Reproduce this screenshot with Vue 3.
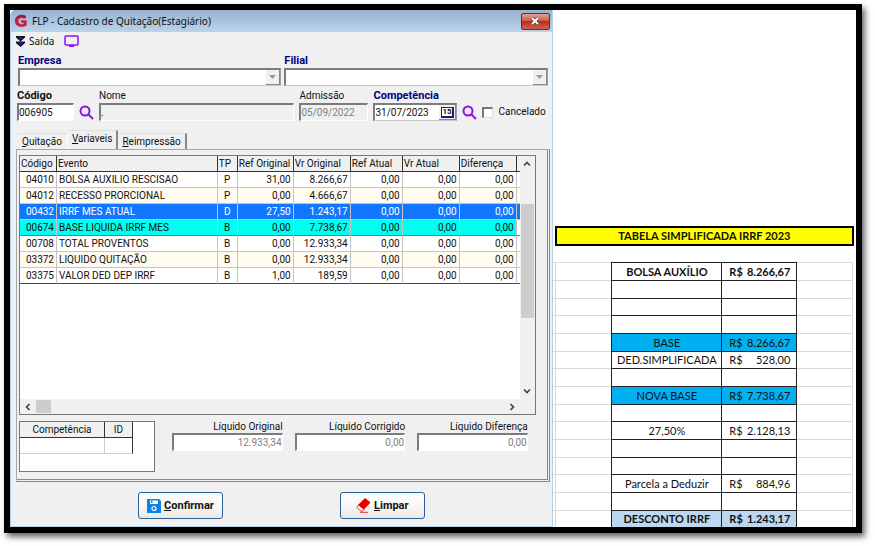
<script setup>
import { ref } from 'vue'

const codigo = ref('006905')
const nome = ref('.')
const admissao = ref('05/09/2022')
const competencia = ref('31/07/2023')
const cancelado = ref(false)

const tabs = [
	{ key: 'Q', rest: 'uitação' },
	{ key: 'V', rest: 'ariaveis' },
	{ key: 'R', rest: 'eimpressão' }
]
const activeTab = ref('V')

const headers = ['Código', 'Evento', 'TP', 'Ref Original', 'Vr Original', 'Ref Atual', 'Vr Atual', 'Diferença']

const eventos = [
	{ cod: '04010', nome: 'BOLSA AUXILIO RESCISAO', tp: 'P', vals: ['31,00', '8.266,67', '0,00', '0,00', '0,00'] },
	{ cod: '04012', nome: 'RECESSO PRORCIONAL', tp: 'P', vals: ['0,00', '4.666,67', '0,00', '0,00', '0,00'], cls: 'alt' },
	{ cod: '00432', nome: 'IRRF MES ATUAL', tp: 'D', vals: ['27,50', '1.243,17', '0,00', '0,00', '0,00'], cls: 'selected' },
	{ cod: '00674', nome: 'BASE LIQUIDA IRRF MES', tp: 'B', vals: ['0,00', '7.738,67', '0,00', '0,00', '0,00'], cls: 'marked' },
	{ cod: '00708', nome: 'TOTAL PROVENTOS', tp: 'B', vals: ['0,00', '12.933,34', '0,00', '0,00', '0,00'] },
	{ cod: '03372', nome: 'LIQUIDO QUITAÇÃO', tp: 'B', vals: ['0,00', '12.933,34', '0,00', '0,00', '0,00'], cls: 'alt' },
	{ cod: '03375', nome: 'VALOR DED DEP IRRF', tp: 'B', vals: ['1,00', '189,59', '0,00', '0,00', '0,00'] }
]

const totais = [
	{ id: 'liq-original', label: 'Líquido Original', value: '12.933,34' },
	{ id: 'liq-corrigido', label: 'Líquido Corrigido', value: '0,00' },
	{ id: 'liq-diferenca', label: 'Líquido Diferença', value: '0,00' }
]

// planilha: linhas vazias ficam com label e valor em branco
const linhas = [
	{ label: 'BOLSA AUXÍLIO', value: '8.266,67', cls: 'bold' },
	{}, {}, {},
	{ label: 'BASE', value: '8.266,67', cls: 'blue' },
	{ label: 'DED.SIMPLIFICADA', value: '528,00' },
	{},
	{ label: 'NOVA BASE', value: '7.738,67', cls: 'blue' },
	{},
	{ label: '27,50%', value: '2.128,13' },
	{}, {},
	{ label: 'Parcela a Deduzir', value: '884,96' },
	{},
	{ label: 'DESCONTO IRRF', value: '1.243,17', cls: 'bold light' }
]
</script>

<template>
	<div class="frame">
		<section class="window">
			<header class="titlebar">
				<svg class="logo" viewBox="0 0 16 16">
					<path d="M14 2.500C9-.8 1 1.500 1 8c0 6.500 8 8.200 13.500 5V7H8v3h3v1.500C8 12.500 5 11 5 8c0-3.500 4-4.500 7-2.500z" fill="#c8203c" />
					<path d="M1.300 6C3 1 9-.5 14 2.500L12.500 5C9 2.500 4 3 1.300 6z" fill="#a01848" />
				</svg>
				<span class="title">FLP - Cadastro de Quitação(Estagiário)</span>
				<button class="close" type="button" aria-label="Fechar">
					<svg viewBox="0 0 10 8" width="10" height="8">
						<path d="M2 1l6 6M8 1L2 7" stroke="#5c3a3a" stroke-width="3.400" />
						<path d="M2 1l6 6M8 1L2 7" stroke="#fff" stroke-width="2" />
					</svg>
				</button>
			</header>

			<nav class="toolbar">
				<button type="button" class="tool">
					<svg viewBox="0 0 9 11" width="9" height="11">
						<path d="M0 0h9v1.500L4.500 5.500 0 1.500zM0 5.500h9V7l-4.500 4L0 7z" fill="#111" />
						<path d="M2 1h5L4.500 4zM2 6.500h5L4.500 9.500z" fill="#1020e8" />
					</svg>
					<span>Saída</span>
				</button>
				<button type="button" class="tool" aria-label="Monitor">
					<svg viewBox="0 0 15 12" width="15" height="12">
						<rect x="1" y="1" width="13" height="9" rx="1" fill="none" stroke="#8b12e8" stroke-width="1.500" />
						<path d="M5 11h5" stroke="#8b12e8" stroke-width="2" />
					</svg>
				</button>
			</nav>

			<div class="filters">
				<div class="field grow">
					<label class="navy" for="empresa">Empresa</label>
					<div class="combo">
						<select id="empresa"><option></option></select>
						<span class="arrow"><svg viewBox="0 0 7 4" width="7" height="4"><path d="M0 0h7L3.500 4z" fill="#999" /></svg></span>
					</div>
				</div>
				<div class="field grow">
					<label class="navy" for="filial">Filial</label>
					<div class="combo">
						<select id="filial"><option></option></select>
						<span class="arrow"><svg viewBox="0 0 7 4" width="7" height="4"><path d="M0 0h7L3.500 4z" fill="#999" /></svg></span>
					</div>
				</div>
			</div>

			<div class="filters second">
				<div class="field codigo">
					<label class="strong" for="codigo">Código</label>
					<input id="codigo" v-model="codigo" class="box" type="text" />
				</div>
				<button type="button" class="search" aria-label="Pesquisar código">
					<svg viewBox="0 0 15 15" width="15" height="15"><circle cx="6" cy="6" r="4.500" /><path d="M9.500 9.500L14 14" /></svg>
				</button>
				<div class="field grow">
					<label for="nome">Nome</label>
					<input id="nome" v-model="nome" class="box gray" type="text" readonly />
				</div>
				<div class="field admissao">
					<label for="admissao">Admissão</label>
					<input id="admissao" v-model="admissao" class="box gray off" type="text" readonly />
				</div>
				<div class="field competencia">
					<label class="navy" for="competencia">Competência</label>
					<div class="combo">
						<input id="competencia" v-model="competencia" type="text" />
						<button type="button" class="cal" aria-label="Calendário"><span>15</span></button>
					</div>
				</div>
				<button type="button" class="search" aria-label="Pesquisar competência">
					<svg viewBox="0 0 15 15" width="15" height="15"><circle cx="6" cy="6" r="4.500" /><path d="M9.500 9.500L14 14" /></svg>
				</button>
				<label class="check"><input v-model="cancelado" type="checkbox" />Cancelado</label>
			</div>

			<div class="tabs">
				<button v-for="t in tabs" :key="t.key" type="button" class="tab" :class="{ active: t.key === activeTab }" @click="activeTab = t.key"><u>{{ t.key }}</u>{{ t.rest }}</button>
			</div>

			<div class="panel">
				<div class="grid">
					<div class="grid-body">
						<div class="tbl-wrap">
							<table class="tbl">
								<colgroup>
									<col class="c-cod" />
									<col />
									<col class="c-tp" />
									<col class="c-ref" />
									<col class="c-m" />
									<col class="c-s" />
									<col class="c-m" />
									<col class="c-m" />
									<col class="c-end" />
								</colgroup>
								<thead>
									<tr>
										<th v-for="h in headers" :key="h">{{ h }}</th>
										<th></th>
									</tr>
								</thead>
								<tbody>
									<tr v-for="e in eventos" :key="e.cod" :class="e.cls">
										<td class="num">{{ e.cod }}</td>
										<td>{{ e.nome }}</td>
										<td class="tp">{{ e.tp }}</td>
										<td v-for="(v, i) in e.vals" :key="i" class="num">{{ v }}</td>
										<td></td>
									</tr>
								</tbody>
							</table>
						</div>
						<div class="vscroll">
							<svg viewBox="0 0 8 5" width="8" height="5"><path d="M1 4.500l3-3 3 3" /></svg>
							<span class="vthumb"></span>
							<svg viewBox="0 0 8 5" width="8" height="5"><path d="M1 .5l3 3 3-3" /></svg>
						</div>
					</div>
					<div class="hscroll">
						<svg viewBox="0 0 5 8" width="5" height="8"><path d="M4.500 1l-3 3 3 3" /></svg>
						<span class="hthumb"></span>
						<svg viewBox="0 0 5 8" width="5" height="8"><path d="M.5 1l3 3-3 3" /></svg>
					</div>
				</div>

				<div class="bottom">
					<div class="mini">
						<table>
							<thead>
								<tr><th class="m-comp">Competência</th><th class="m-id">ID</th></tr>
							</thead>
							<tbody>
								<tr><td></td><td></td></tr>
							</tbody>
						</table>
					</div>
					<div class="totals">
						<div v-for="t in totais" :key="t.id" class="total">
							<label :for="t.id">{{ t.label }}</label>
							<input :id="t.id" class="box off" type="text" :value="t.value" readonly />
						</div>
					</div>
				</div>
			</div>

			<footer class="actions">
				<button type="button" class="action">
					<svg viewBox="0 0 14 14" width="14" height="14">
						<path d="M0 0h12l2 2v12H0z" fill="#0a84e4" />
						<path d="M3 1.500h8v3.500H3z" fill="#fff" />
						<path d="M4 2h1.500v2H4z" fill="#0a84e4" />
						<circle cx="7" cy="9.500" r="2" fill="none" stroke="#fff" stroke-width="1.200" />
					</svg>
					<span><u>C</u>onfirmar</span>
				</button>
				<button type="button" class="action">
					<svg viewBox="0 0 15 15" width="15" height="15">
						<path d="M9 0l5.500 4.500-7 7.500L2 7z" fill="#e60000" />
						<path d="M2.500 7L.8 9.500l4 3.500h2L8 11.500z" fill="#fff" stroke="#e60000" stroke-width=".8" />
						<path d="M4 14.300h8" stroke="#e60000" stroke-width=".8" />
					</svg>
					<span><u>L</u>impar</span>
				</button>
			</footer>
		</section>

		<section class="sheet">
			<h2>TABELA SIMPLIFICADA IRRF 2023</h2>
			<table>
				<colgroup>
					<col class="s-edge" />
					<col class="s-side" />
					<col class="s-label" />
					<col class="s-value" />
					<col class="s-side" />
					<col class="s-edge" />
				</colgroup>
				<tbody>
					<tr v-for="(l, i) in linhas" :key="i" :class="l.cls">
						<td class="line"></td>
						<td class="line"></td>
						<td class="cell first">{{ l.label }}</td>
						<td class="cell">
							<div v-if="l.value" class="money"><span>R$</span><span>{{ l.value }}</span></div>
						</td>
						<td class="line"></td>
						<td></td>
					</tr>
				</tbody>
			</table>
		</section>
	</div>
</template>

<style>
body {
	background: #fff;
}
</style>

<style scoped>
* {
	box-sizing: border-box;
}

.frame {
	display: flex;
	margin: 4px 13px 13px 4px;
	border: 6px solid #000;
	background: #fff;
	box-shadow: 3px 4px 6px rgba(0, 0, 0, .6);
	font-family: Roboto, "Liberation Sans", sans-serif;
	font-size: 10px;
	line-height: 12px;
	color: #111;
	overflow: hidden;
}

button,
input,
select {
	font: inherit;
	color: inherit;
	margin: 0;
	padding: 0;
	border: 0;
	border-radius: 0;
	background: none;
	min-width: 0;
}

svg {
	display: block;
	flex: none;
}

/* Janela */
.window {
	flex: 542 1 0;
	min-width: 0;
	background: #f0f0f0;
	border: 1px solid #b4cfe8;
	border-top: 0;
	border-radius: 5px 0 0 0;
	overflow: hidden;
}

.titlebar {
	display: flex;
	align-items: center;
	gap: 4px;
	height: 22px;
	padding: 0 2px 0 3px;
	background: linear-gradient(#98b3cf, #bbd2ea);
	font-family: "Noto Sans", sans-serif;
}

.logo {
	width: 14px;
	height: 14px;
}

.title {
	flex: 1;
}

.close {
	display: flex;
	align-items: center;
	justify-content: center;
	width: 29px;
	height: 17px;
	border: 1px solid #6a2a2c;
	border-radius: 2px;
	background: linear-gradient(#e0a294, #cf5c48 45%, #b8301c 50%, #d0624c);
}

.toolbar {
	display: flex;
	align-items: center;
	gap: 10px;
	height: 18px;
	padding: 0 5px;
	font-family: "Noto Sans", sans-serif;
}

.tool {
	display: flex;
	align-items: center;
	gap: 4px;
}

.filters {
	display: flex;
	align-items: flex-end;
	gap: 3px;
	padding: 4px 4px 0 7px;
}

.second {
	gap: 5px;
	padding: 3px 6px 0;
}

.field {
	display: flex;
	flex-direction: column;
	flex: none;
}

.grow {
	flex: 1 1 0;
	min-width: 0;
}

.field > label {
	line-height: 14px;
}

.navy,
.strong {
	font-size: 11px;
	font-weight: 700;
}

.navy {
	color: #000080;
}

.codigo {
	width: 57px;
}

.admissao {
	width: 69px;
}

.competencia {
	width: 84px;
}

.combo,
.box {
	height: 18px;
	border: 1px solid #fff;
	border-top: 2px solid #7c7c7c;
	border-left: 2px solid #7c7c7c;
	background: #fff;
}

.combo {
	display: flex;
	align-items: stretch;
	border-right-color: #a0a0a0;
	border-bottom-color: #c8c8c8;
}

.combo select,
.combo input {
	flex: 1;
	appearance: none;
}

.box {
	width: 100%;
}

.gray {
	background: #f0f0f0;
}

.off {
	color: #808080;
}

.arrow,
.cal {
	display: flex;
	align-items: center;
	justify-content: center;
	width: 14px;
	background: #f0f0f0;
	border-right: 1px solid #888;
	border-bottom: 1px solid #888;
}

.cal {
	width: 17px;
}

.cal span {
	border: 1px solid #1c1c70;
	border-width: 1px 2px 2px 1px;
	background: #fff;
	font-size: 8px;
	font-weight: 700;
	line-height: 8px;
}

.search {
	height: 18px;
	width: 15px;
}

.search svg {
	fill: none;
	stroke: #8b12e8;
	stroke-width: 2;
}

.check {
	display: flex;
	align-items: center;
	gap: 5px;
	height: 18px;
}

.check input {
	appearance: none;
	width: 11px;
	height: 11px;
	border: 1px solid #ddd;
	border-top: 2px solid #777;
	border-left: 2px solid #777;
	background: #fff;
}

/* Abas */
.tabs {
	display: flex;
	align-items: flex-end;
	height: 28px;
	padding: 0 6px;
}

.tab {
	height: 16px;
	padding: 0 4px;
	border-top: 1px solid #e0e0e0;
	border-right: 2px solid #888;
}

.tab:first-child {
	padding: 0 5px;
	border-right: 1px solid #fff;
}

.tab.active {
	height: 19px;
	padding-bottom: 3px;
}

.panel {
	margin: 0 2px 0 5px;
	padding: 5px 11px 7px 2px;
	border: 1px solid #a8a8a8;
	border-right: 3px double #888;
	border-bottom: 3px double #888;
}

.grid {
	border: 1px solid #777;
	background: #fff;
}

.grid-body {
	display: flex;
	align-items: flex-start;
}

.tbl-wrap {
	flex: 1;
	min-width: 0;
}

.tbl {
	width: 100%;
	table-layout: fixed;
	border-collapse: separate;
	border-spacing: 0;
}

.c-cod {
	width: 37px;
}

.c-tp {
	width: 20px;
}

.c-ref {
	width: 56px;
}

.c-s {
	width: 52px;
}

.c-m {
	width: 57px;
}

.c-end {
	width: 3px;
}

th,
td {
	padding: 0 2px;
	text-align: left;
	font-weight: 400;
	white-space: nowrap;
}

.tbl th {
	height: 16px;
	padding: 0 0 0 1px;
	background: #f0f0f0;
	border-right: 1px solid #333;
	border-bottom: 1px solid #333;
}

.tbl td {
	height: 16px;
	border-right: 1px solid #c4c4c4;
	border-bottom: 1px solid #c4c4c4;
}

.tbl th:last-child,
.tbl td:last-child {
	border-right: 0;
	padding: 0;
}

.tbl tbody tr:last-child td {
	border-bottom-color: #444;
}

.tbl .num {
	text-align: right;
}

.tbl .tp {
	text-align: center;
}

.alt td {
	background: #fffbf0;
}

.selected td {
	background: #1177ff;
	color: #fff;
}

.marked td {
	background: #00fff0;
	border-bottom-color: #4a8c88;
}

.marked td:last-child {
	background: #fff;
}

.vscroll {
	display: flex;
	flex-direction: column;
	align-items: center;
	width: 15px;
	height: 243px;
	padding: 5px 0;
	background: #f0f0f0;
}

.vthumb {
	width: 13px;
	height: 114px;
	margin: 38px 0 auto;
	background: #cdcdcd;
}

.hscroll {
	display: flex;
	align-items: center;
	height: 15px;
	padding: 0 20px 0 5px;
	background: #f0f0f0;
}

.hthumb {
	width: 15px;
	height: 13px;
	margin: 0 auto 0 6px;
	background: #cdcdcd;
}

.vscroll path,
.hscroll path {
	fill: none;
	stroke: #444;
	stroke-width: 1.6;
}

.bottom {
	display: flex;
	align-items: flex-start;
	gap: 17px;
	padding-top: 6px;
}

.mini {
	flex: none;
	width: 136px;
	height: 51px;
	border: 1px solid #777;
	background: #fff;
}

.mini table {
	border-collapse: separate;
	border-spacing: 0;
}

.mini th,
.mini td {
	height: 16px;
	text-align: center;
	border-right: 1px solid #333;
	border-bottom: 1px solid #333;
}

.mini th {
	background: #f0f0f0;
}

.mini td {
	border-bottom-color: #ccc;
}

.mini td:first-child {
	border-right-color: #ccc;
}

.m-comp {
	width: 85px;
}

.m-id {
	width: 28px;
}

.totals {
	display: flex;
	flex: 1;
	gap: 12px;
	padding-right: 8px;
}

.total {
	display: flex;
	flex-direction: column;
	flex: 1 1 0;
	min-width: 0;
	text-align: right;
}

.total input {
	text-align: right;
}

/* Botoes */
.actions {
	display: flex;
	gap: 117px;
	padding: 10px 127px 7px;
}

.action {
	display: flex;
	flex: 1;
	align-items: center;
	justify-content: center;
	gap: 3px;
	height: 27px;
	border: 1px solid #2c5f93;
	border-radius: 3px;
	background: linear-gradient(#fff, #f7f6f4 60%, #ece8e2);
	font-size: 11px;
	font-weight: 700;
}

/* Planilha */
.sheet {
	display: flex;
	flex-direction: column;
	justify-content: flex-end;
	flex: 304 1 0;
	min-width: 0;
	font-family: Lato, "Open Sans", sans-serif;
	font-size: 11px;
	line-height: 14px;
}

.sheet h2 {
	margin: 0 2px 16px;
	border: 2px solid #000;
	background: #ff0;
	font-size: 11px;
	font-weight: 700;
	line-height: 16px;
	text-align: center;
}

.sheet table {
	width: 100%;
	table-layout: fixed;
	border-collapse: separate;
	border-spacing: 0;
}

.s-edge {
	width: 3px;
}

.s-label {
	width: 111px;
}

.s-value {
	width: 75px;
}

.sheet td {
	height: 18px;
	padding: 0;
	text-align: center;
}

.sheet tr:nth-child(3n) td {
	height: 17px;
}

.line {
	border-top: 1px solid #d9d9d9;
	border-right: 1px solid #d9d9d9;
}

.cell {
	border-top: 1px solid #222;
	border-right: 1px solid #222;
}

.first {
	border-left: 1px solid #222;
}

.sheet .line:nth-child(2) {
	border-right: 0;
}

.money {
	display: flex;
	justify-content: space-between;
	padding: 0 6px 0 7px;
}

.bold .cell {
	font-weight: 700;
}

.blue .cell {
	background: #00b0f0;
}

.light .cell {
	background: #bdd7ee;
}
</style>
